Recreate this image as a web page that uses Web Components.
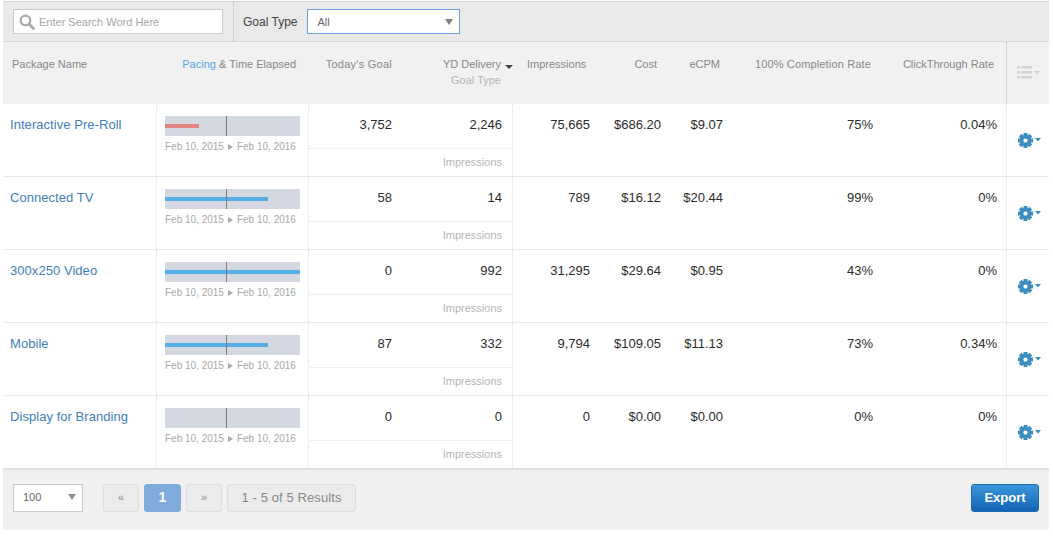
<!DOCTYPE html>
<html>
<head>
<meta charset="utf-8">
<title>Packages</title>
<style>
html, body { margin: 0; padding: 0; background: #fff; }
body { font-family: "Liberation Sans", Arial, sans-serif; color: #333; }
</style>
</head>
<body>
<package-report>
    <report-toolbar slot="toolbar"></report-toolbar>
    <report-header slot="header"></report-header>
    <package-row name="Interactive Pre-Roll" bar="25" color="#e58484" goal="3,752" delivery="2,246" impressions="75,665" cost="$686.20" ecpm="$9.07" completion="75%" ctr="0.04%"></package-row>
    <package-row name="Connected TV" bar="76" color="#55aee6" goal="58" delivery="14" impressions="789" cost="$16.12" ecpm="$20.44" completion="99%" ctr="0%"></package-row>
    <package-row name="300x250 Video" bar="100" color="#55aee6" goal="0" delivery="992" impressions="31,295" cost="$29.64" ecpm="$0.95" completion="43%" ctr="0%"></package-row>
    <package-row name="Mobile" bar="76" color="#55aee6" goal="87" delivery="332" impressions="9,794" cost="$109.05" ecpm="$11.13" completion="73%" ctr="0.34%"></package-row>
    <package-row name="Display for Branding" bar="0" color="#55aee6" goal="0" delivery="0" impressions="0" cost="$0.00" ecpm="$0.00" completion="0%" ctr="0%"></package-row>
    <report-footer slot="footer"></report-footer>
</package-report>

<script>
const COLUMNS = '154px 152px 94px 110px 88px 71px 62px 150px 123px 42px';

class PackageReport extends HTMLElement {
    constructor(){
        super();
        this.attachShadow({ mode: 'open' });
    }
    connectedCallback(){
        this.shadowRoot.innerHTML = `
        <style>
            :host { display: block; width: 1046px; margin: 1px 0 0 3px; }
        </style>
        <slot name="toolbar"></slot>
        <slot name="header"></slot>
        <slot></slot>
        <slot name="footer"></slot>
        `;
    }
}
customElements.define('package-report', PackageReport);

class ReportToolbar extends HTMLElement {
    constructor(){
        super();
        this.attachShadow({ mode: 'open' });
    }
    connectedCallback(){
        this.shadowRoot.innerHTML = `
        <style>
            :host {
                display: flex; align-items: center; box-sizing: border-box;
                height: 41px; padding: 0 0 0 10px;
                background: #e9e9e9; border-top: 1px solid #d4d4d4; border-bottom: 1px solid #d8d8d8;
            }
            .search {
                box-sizing: border-box; width: 210px; height: 25px; display: flex; align-items: center; gap: 4px;
                padding-left: 5px; background: #fff; border: 1px solid #ccc;
                font-size: 11px; color: #a6a6a6;
            }
            .sep { align-self: stretch; margin: 0 9px 0 10px; border-left: 1px dotted #bbb; }
            label { font-size: 12px; color: #444; margin-right: 10px; }
            .select {
                box-sizing: border-box; width: 153px; height: 25px; display: flex; align-items: center;
                justify-content: space-between; padding: 0 6px 0 9px;
                background: #fff; border: 1px solid #6d9fdc; font-size: 11px; color: #666;
            }
            .caret { width: 0; height: 0; border: 4px solid transparent; border-top: 6px solid #808080; border-bottom: 0; }
        </style>
        <div class="search">
            <svg width="16" height="16" viewBox="0 0 16 16">
                <circle cx="6.5" cy="6.5" r="4.8" fill="none" stroke="#a8a8a8" stroke-width="2.2"/>
                <path d="M10 10l4.4 4.4" stroke="#a8a8a8" stroke-width="2.8" stroke-linecap="round"/>
            </svg>
            <span>Enter Search Word Here</span>
        </div>
        <div class="sep"></div>
        <label>Goal Type</label>
        <div class="select"><span>All</span><span class="caret"></span></div>
        `;
    }
}
customElements.define('report-toolbar', ReportToolbar);

class ReportHeader extends HTMLElement {
    constructor(){
        super();
        this.attachShadow({ mode: 'open' });
    }
    connectedCallback(){
        this.shadowRoot.innerHTML = `
        <style>
            :host {
                display: grid; grid-template-columns: ${COLUMNS}; box-sizing: border-box; height: 62px;
                background: #f1f1f1; font-size: 11px; color: #888;
            }
            div { padding-top: 16px; text-align: right; white-space: nowrap; line-height: 13px; }
            .name { text-align: left; padding-left: 9px; }
            .pacing { padding-right: 13px; margin-left: -10px; }
            .pacing b { font-weight: normal; color: #4fa6e3; }
            .goal { padding-right: 11px; letter-spacing: .25px; }
            .delivery { padding-right: 0; }
            .delivery i {
                display: inline-block; width: 0; height: 0; margin-left: 1px; vertical-align: -1px;
                border: 4px solid transparent; border-top: 4px solid #444; border-bottom: 0;
            }
            .delivery span { display: block; margin-top: 3px; padding-right: 12px; color: #b5b5b5; }
            .imp { text-align: left; padding-left: 14px; }
            .cost { padding-right: 15px; }
            .ecpm { padding-right: 14px; }
            .comp { padding-right: 13px; letter-spacing: .15px; }
            .ctr { padding-right: 13px; }
            .menu { padding: 24px 0 0 10px; border-left: 1px dotted #bbb; margin-left: -1px; text-align: left; }
        </style>
        <div class="name">Package Name</div>
        <div class="pacing"><b>Pacing</b> &amp; Time Elapsed</div>
        <div class="goal">Today's Goal</div>
        <div class="delivery">YD Delivery <i></i><span>Goal Type</span></div>
        <div class="imp">Impressions</div>
        <div class="cost">Cost</div>
        <div class="ecpm">eCPM</div>
        <div class="comp">100% Completion Rate</div>
        <div class="ctr">ClickThrough Rate</div>
        <div class="menu">
            <svg width="24" height="14" viewBox="0 0 24 14" fill="#d4d4d4">
                <rect x="0" y="0" width="3" height="2.6"/><rect x="4" y="0" width="11" height="2.6"/>
                <rect x="0" y="5" width="3" height="2.6"/><rect x="4" y="5" width="11" height="2.6"/>
                <rect x="0" y="10" width="3" height="2.6"/><rect x="4" y="10" width="11" height="2.6"/>
                <path d="M17 5h6l-3 3.5z"/>
            </svg>
        </div>
        `;
    }
}
customElements.define('report-header', ReportHeader);

class PacingBar extends HTMLElement {
    constructor(){
        super();
        this.attachShadow({ mode: 'open' });
    }
    connectedCallback(){
        const bar = Number(this.getAttribute('bar')) || 0;
        const color = this.getAttribute('color');
        this.shadowRoot.innerHTML = `
        <style>
            :host { display: block; width: 135px; }
            .track { position: relative; height: 20px; background: #d4d9e1; }
            .fill { position: absolute; left: 0; top: 8px; height: 4px; width: ${bar}%; background: ${color}; }
            .now { position: absolute; left: 61px; top: 0; width: 1px; height: 20px; background: #7d7d7d; }
            .dates { margin-top: 5px; display: flex; gap: 4px; align-items: center; white-space: nowrap; font-size: 10px; line-height: 12px; color: #a9a9a9; }
            .dates i { width: 0; height: 0; border: 3px solid transparent; border-left: 5px solid #a9a9a9; border-right: 0; }
        </style>
        <div class="track"><div class="fill"></div><div class="now"></div></div>
        <div class="dates"><span>Feb 10, 2015</span><i></i><span>Feb 10, 2016</span></div>
        `;
    }
}
customElements.define('pacing-bar', PacingBar);

class PackageRow extends HTMLElement {
    constructor(){
        super();
        this.attachShadow({ mode: 'open' });
    }
    connectedCallback(){
        const a = name => this.getAttribute(name);
        const teeth = [0, 45, 90, 135, 180, 225, 270, 315]
            .map(r => `<path d="M-2-7.5h4v3h-4z" transform="rotate(${r})"/>`).join('');
        this.shadowRoot.innerHTML = `
        <style>
            :host {
                display: grid; grid-template-columns: ${COLUMNS}; box-sizing: border-box; height: 73px;
                background: #fff; border-bottom: 1px solid #e8e8e8; font-size: 13px; color: #2b2b2b;
            }
            :host(:last-of-type) { border-bottom: 0; height: 72px; }
            .cell { padding-top: 13px; line-height: 15px; text-align: right; padding-right: 11px; white-space: nowrap; }
            .name { text-align: left; padding-left: 7px; padding-right: 0; letter-spacing: .05px; color: #4280ba; border-right: 1px dotted #e0e0e0; }
            .pacing { padding: 12px 0 0 8px; border-right: 1px dotted #e0e0e0; }
            .split { grid-column: span 2; display: grid; grid-template-columns: 94px 109px; grid-template-rows: 45px 1fr; border-right: 1px dotted #e0e0e0; }
            .split .cell { border-bottom: 1px solid #efefef; }
            .goaltype { grid-column: span 2; text-align: right; padding: 7px 10px 0 0; font-size: 11px; line-height: 13px; color: #b5b5b5; }
            .split .cell:nth-child(2) { padding-right: 10px; }
            .ctr { padding-right: 10px; }
            .actions { padding: 29px 0 0 11px; border-left: 1px dotted #e0e0e0; margin-left: -1px; }
            .actions svg { display: block; }
        </style>
        <div class="cell name">${a('name')}</div>
        <div class="pacing"><pacing-bar bar="${a('bar')}" color="${a('color')}"></pacing-bar></div>
        <div class="split">
            <div class="cell">${a('goal')}</div>
            <div class="cell">${a('delivery')}</div>
            <div class="goaltype">Impressions</div>
        </div>
        <div class="cell">${a('impressions')}</div>
        <div class="cell">${a('cost')}</div>
        <div class="cell">${a('ecpm')}</div>
        <div class="cell">${a('completion')}</div>
        <div class="cell ctr">${a('ctr')}</div>
        <div class="actions">
            <svg width="24" height="16" viewBox="0 0 24 16" fill="#3d8dbf">
                <g transform="translate(7.5 7.5)">
                    ${teeth}
                    <circle r="3.9" fill="none" stroke="#3d8dbf" stroke-width="3.6"/>
                </g>
                <path d="M17 5h6l-3 3.5z"/>
            </svg>
        </div>
        `;
    }
}
customElements.define('package-row', PackageRow);

class ReportFooter extends HTMLElement {
    constructor(){
        super();
        this.attachShadow({ mode: 'open' });
    }
    connectedCallback(){
        this.shadowRoot.innerHTML = `
        <style>
            :host {
                display: flex; align-items: flex-start; box-sizing: border-box; height: 62px; padding: 14px 10px 0 10px;
                background: #f0f0f0; border-top: 2px solid #e0e0e0;
            }
            .size {
                box-sizing: border-box; width: 70px; height: 28px; display: flex; align-items: center; justify-content: space-between;
                padding: 0 6px 2px 9px; margin-right: 20px; background: #fff; border: 1px solid #ccc; font-size: 11px; color: #666;
            }
            .caret { width: 0; height: 0; border: 4px solid transparent; border-top: 6px solid #909090; border-bottom: 0; }
            .btn {
                box-sizing: border-box; height: 28px; margin-right: 5px; padding-bottom: 2px; display: flex; align-items: center; justify-content: center;
                background: #ebebeb; border: 1px solid #dcdcdc; border-radius: 3px; font-size: 11px; color: #888;
            }
            .arrow { width: 36px; }
            .current { width: 37px; background: #7eaadc; border-color: #7eaadc; color: #fff; font-size: 14px; font-weight: bold; }
            .results { width: 129px; font-size: 13px; letter-spacing: .1px; }
            .export {
                box-sizing: border-box; margin-left: auto; width: 68px; height: 28px; padding-bottom: 2px; display: flex; align-items: center; justify-content: center;
                background: linear-gradient(#3a97da, #1463b6); border: 1px solid #1b6cb8; border-radius: 3px;
                color: #fff; font-size: 13px; font-weight: bold;
            }
        </style>
        <div class="size"><span>100</span><span class="caret"></span></div>
        <div class="btn arrow">«</div>
        <div class="btn current">1</div>
        <div class="btn arrow">»</div>
        <div class="btn results">1 - 5 of 5 Results</div>
        <div class="export">Export</div>
        `;
    }
}
customElements.define('report-footer', ReportFooter);
</script>
</body>
</html>
